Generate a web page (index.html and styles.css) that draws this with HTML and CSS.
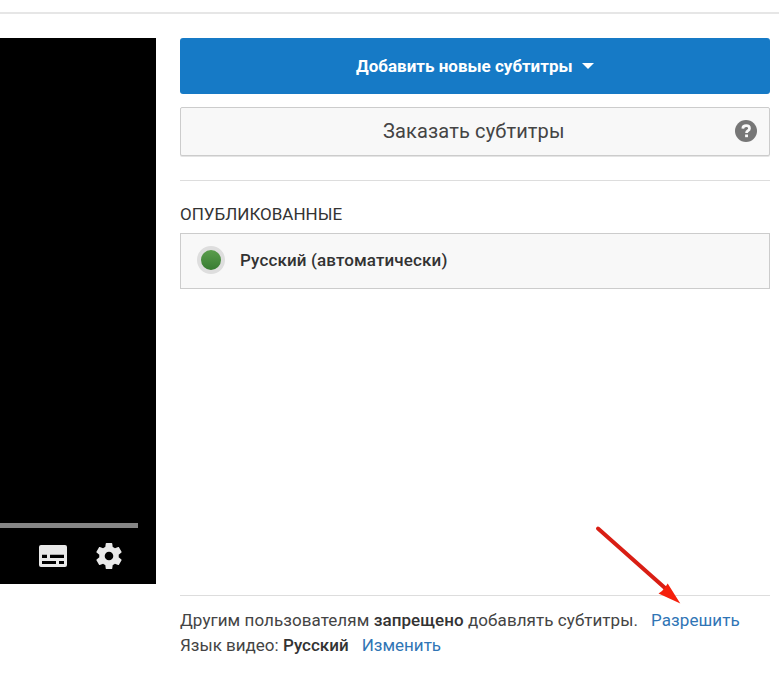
FILE: index.html
```html
<!DOCTYPE html>
<html lang="ru">
<head>
<meta charset="utf-8">
<title>Субтитры</title>
<link rel="stylesheet" href="styles.css">
</head>
<body>
<main class="page">
  <section class="player">
    <div class="progress"></div>
    <div class="controls">
      <svg class="cc" viewBox="0 0 28 22"><path fill="#e9e9e9" fill-rule="evenodd" d="M2 0H26Q28 0 28 2V20Q28 22 26 22H2Q0 22 0 20V2Q0 0 2 0ZM3 9.800V12.900H8V9.800ZM11 9.800V12.900H25V9.800ZM3 16V19H17V16ZM20 16V19H25V16Z"/></svg>
      <svg class="gear" viewBox="2 2 20 20"><path fill="#e9e9e9" d="M19.430 12.980c.04-.32.07-.64.07-.98s-.03-.66-.07-.98l2.110-1.650c.19-.15.24-.42.12-.64l-2-3.460c-.12-.22-.39-.3-.61-.22l-2.490 1c-.52-.4-1.080-.73-1.690-.98l-.38-2.650C14.460 2.180 14.250 2 14 2h-4c-.25 0-.46.18-.49.42l-.38 2.650c-.61.25-1.170.59-1.690.98l-2.490-1c-.23-.09-.49 0-.61.22l-2 3.460c-.13.22-.07.49.12.64l2.110 1.650c-.04.32-.07.65-.07.98s.03.66.07.98l-2.110 1.650c-.19.15-.24.42-.12.64l2 3.460c.12.22.39.3.61.22l2.490-1c.52.4 1.080.73 1.690.98l.38 2.650c.03.24.24.42.49.42h4c.25 0 .46-.18.49-.42l.38-2.650c.61-.25 1.170-.59 1.690-.98l2.490 1c.23.09.49 0 .61-.22l2-3.460c.12-.22.07-.49-.12-.64l-2.110-1.650zM12 15.300a3.300 3.300 0 1 1 0-6.600 3.300 3.300 0 0 1 0 6.600z"/></svg>
    </div>
  </section>
  <section class="panel">
    <button class="add"><span class="add-label">Добавить новые субтитры</span><svg class="caret" viewBox="0 0 12 6"><path fill="#fff" d="M0 0H12L6 6Z"/></svg></button>
    <button class="order"><span class="order-label">Заказать субтитры</span><svg class="help" viewBox="0 0 22 22"><circle cx="11" cy="11" r="11" fill="#777"/><path fill="none" stroke="#fafafa" stroke-width="2.700" d="M7.800 8.600Q7.900 5.700 11.200 5.700Q14.500 5.700 14.500 8.400Q14.500 9.800 12.900 10.700Q11.500 11.500 11.500 13.100"/><path fill="#fafafa" d="M10.100 14.500h2.900v2.700h-2.900z"/></svg></button>
    <hr class="rule">
    <h2 class="heading"><span>ОПУБЛИКОВАННЫЕ</span></h2>
    <div class="track"><i class="status"></i><span class="track-label">Русский (автоматически)</span></div>
    <footer class="footer">
      <p class="access">Другим пользователям <b>запрещено</b> добавлять субтитры.<a class="allow">Разрешить</a></p>
      <p>Язык видео: <b>Русский</b><a class="change">Изменить</a></p>
    </footer>
  </section>
</main>
<svg class="arrow" viewBox="590 520 100 90"><path stroke="#d91e14" stroke-width="4" stroke-linecap="round" d="M598 528.500L665 588"/><path fill="#f5200c" d="M680.300 603.500L667.700 583.500L665 587.500L662 591L658.500 593.500Z"/></svg>
</body>
</html>
```
FILE: styles.css
```css
* { box-sizing: border-box; }
body {
  margin: 0;
  padding-top: 12px;
  height: 694px;
  overflow: hidden;
  background: #fff;
  color: #444;
  font-family: Roboto, "Liberation Sans", sans-serif;
  font-size: 17px;
}
.page {
  display: flex;
  gap: 24px;
  height: 682px;
  padding-top: 24px;
  border-top: 2px solid #e6e6e6;
}
.player {
  display: flex;
  flex-direction: column;
  justify-content: flex-end;
  width: 156px;
  height: 546px;
  background: #000;
}
.progress { width: 138px; height: 5px; background: #858585; }
.controls {
  display: flex;
  align-items: center;
  height: 56px;
  padding-left: 39px;
}
.cc { width: 28px; height: 22px; }
.gear { width: 26px; height: 26px; margin-left: 29px; }
.panel {
  display: flex;
  flex-direction: column;
  width: 590px;
}
button {
  display: flex;
  align-items: center;
  padding: 0;
  font-family: inherit;
}
.add {
  height: 56px;
  padding-left: 176px;
  border: 0;
  border-radius: 3px;
  background: #167ac6;
  color: #fff;
  font-size: 17px;
  font-weight: 700;
}
.caret { width: 12px; height: 6px; margin-left: 9px; }
.order {
  height: 49px;
  margin-top: 13px;
  padding-left: 202px;
  padding-right: 12px;
  padding-bottom: 1px;
  border: 1px solid #ccc;
  border-radius: 2px;
  background: #f8f8f8;
  color: #444;
  font-size: 20px;
  letter-spacing: 0.15px;
  box-shadow: 0 1px 0 #e4e4e4;
}
.help { width: 22px; height: 22px; margin-left: auto; }
.rule {
  width: 100%;
  height: 1px;
  margin: 24px 0 0;
  border: 0;
  background: #ddd;
}
.heading {
  margin: 22px 0 0;
  height: 30px;
  color: #333;
  font-size: 17px;
  font-weight: 400;
  line-height: 22px;
}
.track {
  display: flex;
  align-items: center;
  height: 56px;
  padding-left: 16px;
  padding-bottom: 2px;
  border: 1px solid #ccc;
  background: #f8f8f8;
  color: #333;
  font-weight: 500;
  letter-spacing: 0.12px;
}
.status {
  width: 28px;
  height: 28px;
  border: 4px solid #dedede;
  border-radius: 50%;
  background: linear-gradient(#5a9d4c, #387c32);
}
.track-label { margin-left: 15px; }
.footer {
  margin-top: 306px;
  padding-top: 12px;
  border-top: 1px solid #ddd;
}
p { margin: 0; line-height: 25px; white-space: nowrap; }
.access { letter-spacing: 0.07px; }
b { color: #333; font-weight: 500; }
a { color: #3075b5; }
.allow, .change { margin-left: 13px; }
.arrow {
  position: absolute;
  left: 590px;
  top: 520px;
  width: 100px;
  height: 90px;
}
```
